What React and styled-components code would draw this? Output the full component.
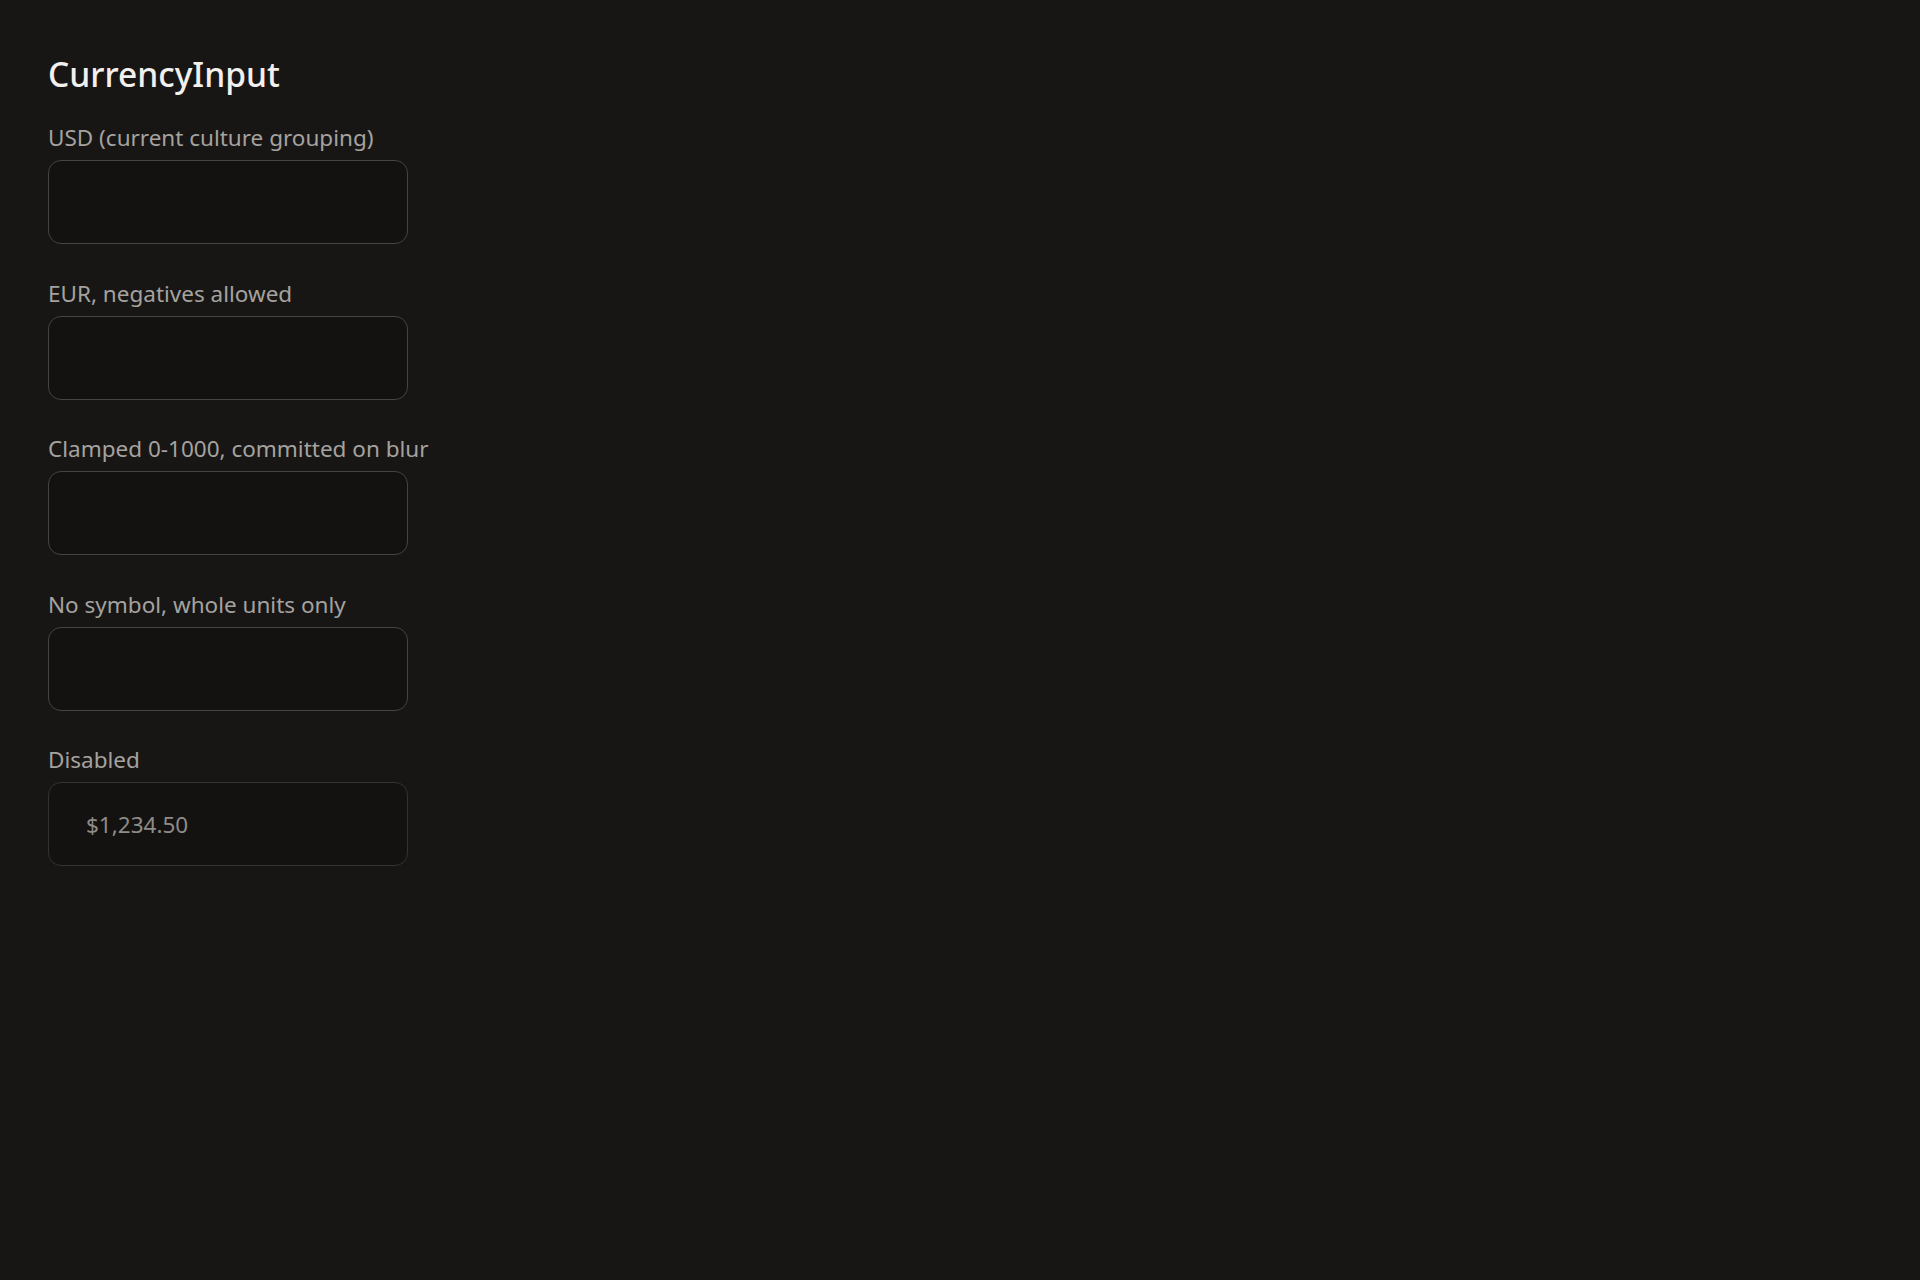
import React from "react";
import styled, { createGlobalStyle } from "styled-components";

const Global = createGlobalStyle`
  html, body {
    margin: 0;
    padding: 0;
    background: #171615;
    min-height: 100%;
  }
  body {
    font-family: "Noto Sans", "Open Sans", sans-serif;
    color: #eeebe8;
  }
`;

const Page = styled.main`
  min-height: 1280px;
  box-sizing: border-box;
  padding: 48px 48px;
  background: #171615;
`;

const Title = styled.h1`
  margin: 0 0 20px;
  font-size: 33.5px;
  line-height: 52px;
  font-weight: 500;
  color: #f2f0ee;
`;

const Stack = styled.div`
  display: flex;
  flex-direction: column;
  gap: 31.6px;
`;

const Field = styled.label`
  display: flex;
  flex-direction: column;
  gap: 4px;
`;

const Caption = styled.span`
  font-size: 22.5px;
  line-height: 36px;
  color: #a5a29f;
`;

const Box = styled.input`
  box-sizing: border-box;
  width: 360px;
  height: 84px;
  padding: 0 37px;
  border-radius: 13px;
  border: 1.5px solid ${(p) => (p.disabled ? "#34322f" : "#464341")};
  background: #131211;
  color: ${(p) => (p.disabled ? "#8e8b88" : "#eeebe8")};
  font-family: inherit;
  font-size: 22.5px;
  outline: none;
  &:disabled {
    -webkit-text-fill-color: #8e8b88;
    opacity: 1;
  }
`;

const fields = [
  { label: "USD (current culture grouping)" },
  { label: "EUR, negatives allowed" },
  { label: "Clamped 0-1000, committed on blur" },
  { label: "No symbol, whole units only" },
  { label: "Disabled", value: "$1,234.50", disabled: true },
];

export default function App() {
  return (
    <>
      <Global />
      <Page>
        <Title>CurrencyInput</Title>
        <Stack>
          {fields.map((f) => (
            <Field key={f.label}>
              <Caption>{f.label}</Caption>
              <Box
                type="text"
                inputMode="decimal"
                disabled={f.disabled}
                defaultValue={f.value ?? ""}
                readOnly={f.disabled}
              />
            </Field>
          ))}
        </Stack>
      </Page>
    </>
  );
}
